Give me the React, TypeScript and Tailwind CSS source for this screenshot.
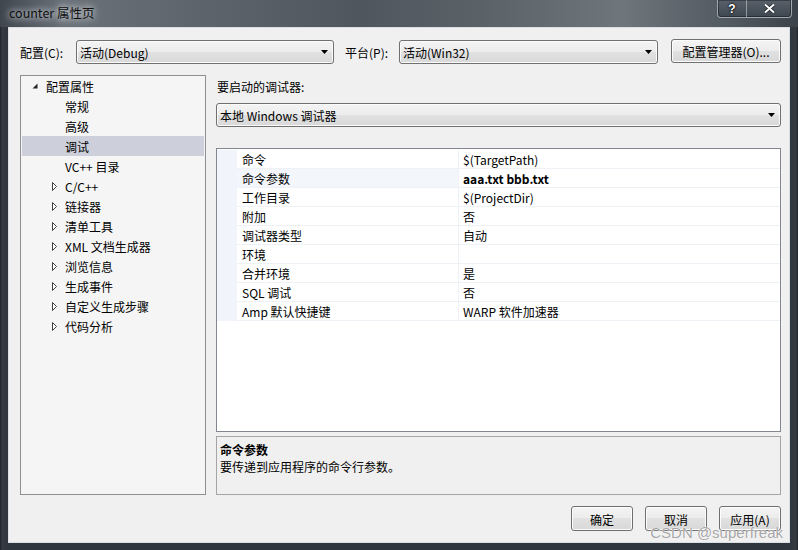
import React from "react";

const comboBg =
  "bg-[linear-gradient(#f4f4f4,#ececec_50%,#e1e1e1_50%,#d8d8d8)]";

const DownArrow = () => (
  <svg width="7" height="4" viewBox="0 0 7 4" className="shrink-0">
    <path d="M0 0H7L3.5 4Z" fill="#000" />
  </svg>
);

const Combo = ({ text, className }: { text: string; className: string }) => (
  <div
    className={`h-[24px] rounded-[3px] border border-[#707070] ${comboBg} shadow-[inset_0_0_0_1px_#fbfbfb] flex items-center pl-[3px] pr-[5px] ${className}`}
  >
    <span className="flex-1 leading-[16px] pt-[2px]">{text}</span>
    <DownArrow />
  </div>
);

const Button = ({ label, className }: { label: string; className: string }) => (
  <div
    className={`rounded-[3px] border border-[#707070] ${comboBg} shadow-[inset_0_0_0_1px_#fcfcfc] flex items-center justify-center leading-[16px] pt-[2px] ${className}`}
  >
    {label}
  </div>
);

const Expanded = () => (
  <svg width="6" height="6" viewBox="0 0 6 6" className="absolute left-[10px] top-[7px]">
    <path d="M5.5 0.5V5.5H0.5Z" fill="#262626" />
  </svg>
);

const Collapsed = () => (
  <svg width="6" height="9" viewBox="0 0 6 9" className="absolute left-[30px] top-[6px]">
    <path d="M0.5 0.5L4.5 4.5L0.5 8.5Z" fill="#fff" stroke="#3c3c3c" strokeWidth="1" />
  </svg>
);

type TreeItem = { label: string; kind: "root" | "leaf" | "closed"; selected?: boolean };

const tree: TreeItem[] = [
  { label: "配置属性", kind: "root" },
  { label: "常规", kind: "leaf" },
  { label: "高级", kind: "leaf" },
  { label: "调试", kind: "leaf", selected: true },
  { label: "VC++ 目录", kind: "leaf" },
  { label: "C/C++", kind: "closed" },
  { label: "链接器", kind: "closed" },
  { label: "清单工具", kind: "closed" },
  { label: "XML 文档生成器", kind: "closed" },
  { label: "浏览信息", kind: "closed" },
  { label: "生成事件", kind: "closed" },
  { label: "自定义生成步骤", kind: "closed" },
  { label: "代码分析", kind: "closed" },
];

const props: { name: string; value: string; active?: boolean }[] = [
  { name: "命令", value: "$(TargetPath)" },
  { name: "命令参数", value: "aaa.txt bbb.txt", active: true },
  { name: "工作目录", value: "$(ProjectDir)" },
  { name: "附加", value: "否" },
  { name: "调试器类型", value: "自动" },
  { name: "环境", value: "" },
  { name: "合并环境", value: "是" },
  { name: "SQL 调试", value: "否" },
  { name: "Amp 默认快捷键", value: "WARP 软件加速器" },
];

const TitleButtons = () => (
  <div className="absolute right-[6px] top-0 flex h-[18px] rounded-b-[4px] border border-t-0 border-[#c4c9cf]/70 bg-[linear-gradient(#59616a,#3e464f)] shadow-[inset_0_0_0_1px_rgba(0,0,0,0.35)]">
    <div className="w-[29px] flex items-center justify-center border-r border-[#c4c9cf]/60 text-white font-bold text-[12px] leading-none [text-shadow:0_0_2px_#000,0_0_2px_#000] font-['Liberation_Sans',sans-serif]">
      ?
    </div>
    <div className="w-[44px] flex items-center justify-center">
      <svg width="11" height="9" viewBox="0 0 11 9">
        <path d="M1 0.5L5.5 4.5L10 0.5M1 8.5L5.5 4.5L10 8.5" stroke="#1b1f24" strokeWidth="3.4" fill="none" />
        <path d="M1 0.5L5.5 4.5L10 0.5M1 8.5L5.5 4.5L10 8.5" stroke="#fff" strokeWidth="2" fill="none" />
      </svg>
    </div>
  </div>
);

export default function App() {
  return (
    <div className="w-[798px] h-[550px] bg-[linear-gradient(90deg,#1e2329,#343b43_2px,#2f363e_8px,#2f363e_calc(100%-8px),#343b43_calc(100%-2px),#1e2329)] flex flex-col text-[12px] text-black font-['Noto_Sans_CJK_SC',sans-serif] overflow-hidden">
      {/* title bar */}
      <div className="relative h-[27px] shrink-0 bg-[linear-gradient(90deg,#3f464e,#6a7178_8%,#5d646b_25%,#4f565e_45%,#5a6167_60%,#6e757b_78%,#505860_92%,#3b424a)]">
        <span className="absolute left-[9px] top-[5px] leading-[16px] text-[12.5px] text-[#101010] [text-shadow:0_0_6px_rgba(235,240,245,0.9),0_0_10px_rgba(235,240,245,0.7)]">
          counter 属性页
        </span>
        <TitleButtons />
      </div>

      {/* client */}
      <div className="flex-1 mx-[8px] mb-[7px] border border-[#dadfe5] bg-[#f0f0f0] relative flex flex-col pl-[11px] pr-[8px] pt-[11px]">
        <div className="flex items-center h-[25px]">
          <span className="w-[56px] leading-[16px] pt-[2px]">配置(C):</span>
          <Combo text="活动(Debug)" className="w-[258px] mt-[1px]" />
          <span className="ml-[11px] w-[54px] leading-[16px] pt-[2px]">平台(P):</span>
          <Combo text="活动(Win32)" className="w-[259px] mt-[1px]" />
          <Button label="配置管理器(O)..." className="ml-[13px] w-[110px] h-[24px] -mt-[1px]" />
        </div>

        <div className="flex mt-[11px] h-[420px]">
          {/* tree */}
          <div className="w-[186px] border border-[#8e8f91] bg-[#f5f5f5] p-[1px] pt-0">
            {tree.map((t) => (
              <div
                key={t.label}
                className={`relative h-[20px] flex items-center leading-[16px] pt-[2px] ${t.selected ? "bg-[#cdd0da]" : ""} ${t.kind === "root" ? "pl-[24px]" : "pl-[43px]"}`}
              >
                {t.kind === "root" && <Expanded />}
                {t.kind === "closed" && <Collapsed />}
                {t.label}
              </div>
            ))}
          </div>

          {/* right side */}
          <div className="ml-[10px] flex-1 flex flex-col">
            <div className="mt-[1px] h-[20px] pl-[1px] pt-[2px] flex items-center leading-[16px]">要启动的调试器:</div>
            <Combo text="本地 Windows 调试器" className="mt-[7px] w-full" />

            <div className="mt-[21px] flex-1 border border-[#828790] bg-white pt-[1px]">
              {props.map((p) => (
                <div key={p.name} className="flex h-[19px]">
                  <div className="w-[20px] bg-[#f1f5fb]" />
                  <div
                    className={`w-[221px] pl-[5px] pt-[2px] flex items-center border-b border-[#eef1f6] leading-[16px] ${p.active ? "bg-[#f3f7fc]" : ""}`}
                  >
                    {p.name}
                  </div>
                  <div
                    className={`flex-1 pl-[4px] pt-[2px] flex items-center border-b border-l border-[#eef1f6] leading-[16px] ${p.active ? "font-bold" : ""}`}
                  >
                    {p.value}
                  </div>
                </div>
              ))}
            </div>

            <div className="mt-[4px] h-[59px] border border-[#a5a5a5] bg-[#f0f0f0] pl-[3px] pt-[4px]">
              <div className="leading-[17px] font-bold">命令参数</div>
              <div className="leading-[17px]">要传递到应用程序的命令行参数。</div>
            </div>
          </div>
        </div>

        <div className="flex justify-end gap-[12px] mt-[11px]">
          <Button label="确定" className="w-[62px] h-[25px]" />
          <Button label="取消" className="w-[62px] h-[25px]" />
          <Button label="应用(A)" className="w-[62px] h-[25px]" />
        </div>

        <span className="absolute right-[6px] bottom-[0px] text-[15px] leading-[18px] text-[#8d8d8d]/80 font-['Liberation_Sans',sans-serif] [text-shadow:0_0_1px_#fff,0_0_1px_#fff]">
          CSDN @superfreak
        </span>
      </div>
    </div>
  );
}
